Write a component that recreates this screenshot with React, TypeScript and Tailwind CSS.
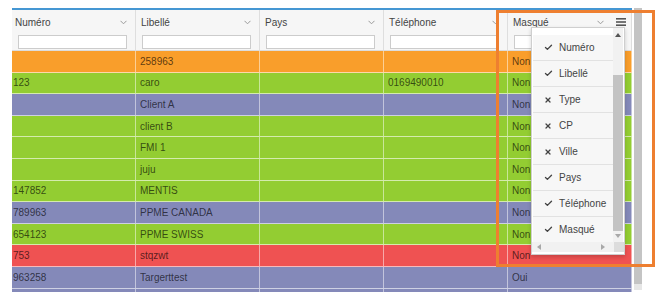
import { Check, X } from "lucide-react"

type Row = { num: string; lib: string; tel: string; m: string; c: string }

const ROWS: Row[] = [
  { num: "", lib: "258963", tel: "", m: "Non", c: "bg-[#f99e2b]" },
  { num: "123", lib: "caro", tel: "0169490010", m: "Non", c: "bg-[#93cd32]" },
  { num: "", lib: "Client A", tel: "", m: "Non", c: "bg-[#8489b9]" },
  { num: "", lib: "client B", tel: "", m: "Non", c: "bg-[#93cd32]" },
  { num: "", lib: "FMI 1", tel: "", m: "Non", c: "bg-[#93cd32]" },
  { num: "", lib: "juju", tel: "", m: "Non", c: "bg-[#93cd32]" },
  { num: "147852", lib: "MENTIS", tel: "", m: "Non", c: "bg-[#93cd32]" },
  { num: "789963", lib: "PPME CANADA", tel: "", m: "Non", c: "bg-[#8489b9]" },
  { num: "654123", lib: "PPME SWISS", tel: "", m: "Non", c: "bg-[#93cd32]" },
  { num: "753", lib: "stqzwt", tel: "", m: "Non", c: "bg-[#ef5252]" },
  { num: "963258", lib: "Targerttest", tel: "", m: "Oui", c: "bg-[#8489b9]" },
  { num: "", lib: "", tel: "", m: "", c: "bg-[#8489b9]" },
]

const COLUMNS = ["Numéro", "Libellé", "Pays", "Téléphone", "Masqué"]

const MENU = [
  { label: "Numéro", on: true },
  { label: "Libellé", on: true },
  { label: "Type", on: false },
  { label: "CP", on: false },
  { label: "Ville", on: false },
  { label: "Pays", on: true },
  { label: "Téléphone", on: true },
  { label: "Masqué", on: true },
]

function Chevron() {
  return (
    <svg width="7" height="5" viewBox="0 0 7 5" className="shrink-0">
      <polyline points="0.5,0.8 3.5,3.8 6.5,0.8" fill="none" stroke="#9a9a9a" strokeWidth="1" />
    </svg>
  )
}

function Hamburger() {
  return (
    <svg width="10" height="8" viewBox="0 0 10 8" className="shrink-0">
      <rect x="0" y="0" width="10" height="1.6" fill="#555" />
      <rect x="0" y="3.2" width="10" height="1.6" fill="#555" />
      <rect x="0" y="6.4" width="10" height="1.6" fill="#555" />
    </svg>
  )
}

function Triangle({ dir }: { dir: "up" | "down" | "left" | "right" }) {
  const pts = {
    up: "0,4 3,0 6,4",
    down: "0,0 6,0 3,4",
    left: "4,0 4,6 0,3",
    right: "0,0 0,6 4,3",
  }[dir]
  const horiz = dir === "left" || dir === "right"
  return (
    <svg width={horiz ? 4 : 6} height={horiz ? 6 : 4} viewBox={horiz ? "0 0 4 6" : "0 0 6 4"}>
      <polygon points={pts} fill={dir === "up" ? "#555" : "#a8a8a8"} />
    </svg>
  )
}

function ColumnMenu() {
  return (
    <div className="absolute left-[531px] top-[27px] w-[94px] h-[228px] bg-white border border-[#cfcfcf] shadow-[0_2px_4px_rgba(0,0,0,0.18)] flex flex-col">
      <div className="flex flex-1 min-h-0">
        <div className="w-[81px] pt-[7px] pl-[1px]">
          {MENU.map((it) => (
            <div
              key={it.label}
              className="h-[26px] flex items-center bg-[#f7f7f7] border-b border-[#e2e2e2] text-[10px] text-[#444]"
            >
              <span className="w-[26px] flex justify-center pl-[4px]">
                {it.on ? (
                  <Check size={9} strokeWidth={3.6} color="#444" />
                ) : (
                  <X size={8} strokeWidth={3.8} color="#444" />
                )}
              </span>
              <span>{it.label}</span>
            </div>
          ))}
        </div>
        <div className="w-[10px] bg-[#f1f1f1] flex flex-col items-center pt-[5px] pb-[4px]">
          <Triangle dir="up" />
          <div className="w-[10px] bg-[#c3c3c3] mt-[38px] h-[156px]" />
          <div className="mt-auto">
            <Triangle dir="down" />
          </div>
        </div>
      </div>
      <div className="h-[10px] flex mb-[2px]">
        <div className="w-[82px] bg-[#f1f1f1] flex items-center justify-between pl-[5px] pr-[9px]">
          <Triangle dir="left" />
          <Triangle dir="right" />
        </div>
        <div className="w-[10px] bg-[#dcdcdc]" />
      </div>
    </div>
  )
}

export default function App() {
  return (
    <div className="relative w-[667px] h-[308px] bg-white overflow-hidden font-['Liberation_Sans',Arial,sans-serif]">
      <div className="flex pl-[12px] pt-[8px]">
        <div className="w-[620px]">
          <div className="h-[2px] bg-[#4597d3]" />
          <div className="flex h-[41px] bg-[#f6f6f6] border-b border-[#dcdcdc]">
            {COLUMNS.map((c, i) => (
              <div
                key={c}
                className={`w-[124px] flex flex-col border-r border-[#dedede] ${i === 0 ? "pl-[3px]" : "pl-[5px]"} pr-[8px] pt-[5px]`}
              >
                <div className="flex items-center h-[14px] text-[10px] text-[#444]">
                  <span className="flex-1">{c}</span>
                  <Chevron />
                  {i === 4 && (
                    <span className="ml-[12px] mr-[-3px]">
                      <Hamburger />
                    </span>
                  )}
                </div>
                <div className={`mt-[6px] h-[14px] w-[109px] ${i === 0 ? "ml-[3px]" : "ml-[1px]"} bg-white border border-[#cccccc]`} />
              </div>
            ))}
          </div>
          <div className="h-[241px] overflow-hidden">
            {ROWS.map((r, i) => (
              <div
                key={i}
                className={`flex h-[21.6px] ${r.c} border-b border-white/60 text-[10px] text-black/65`}
              >
                {[r.num, r.lib, "", r.tel, r.m].map((v, j) => (
                  <div
                    key={j}
                    className={`w-[124px] flex items-center border-r border-white/50 ${j === 0 ? "pl-[1px]" : "pl-[4px]"}`}
                  >
                    {v}
                  </div>
                ))}
              </div>
            ))}
          </div>
        </div>
        <div className="ml-[2px] w-[8px] flex flex-col">
          <div className="h-[276px] bg-[#c4c4c4]" />
          <div className="h-[6px] bg-[#e6e6e6]" />
        </div>
      </div>

      <ColumnMenu />

      <div className="absolute left-[496px] top-[10px] w-[159px] h-[257px] border-[3px] border-[#ee7f30] pointer-events-none" />
    </div>
  )
}
